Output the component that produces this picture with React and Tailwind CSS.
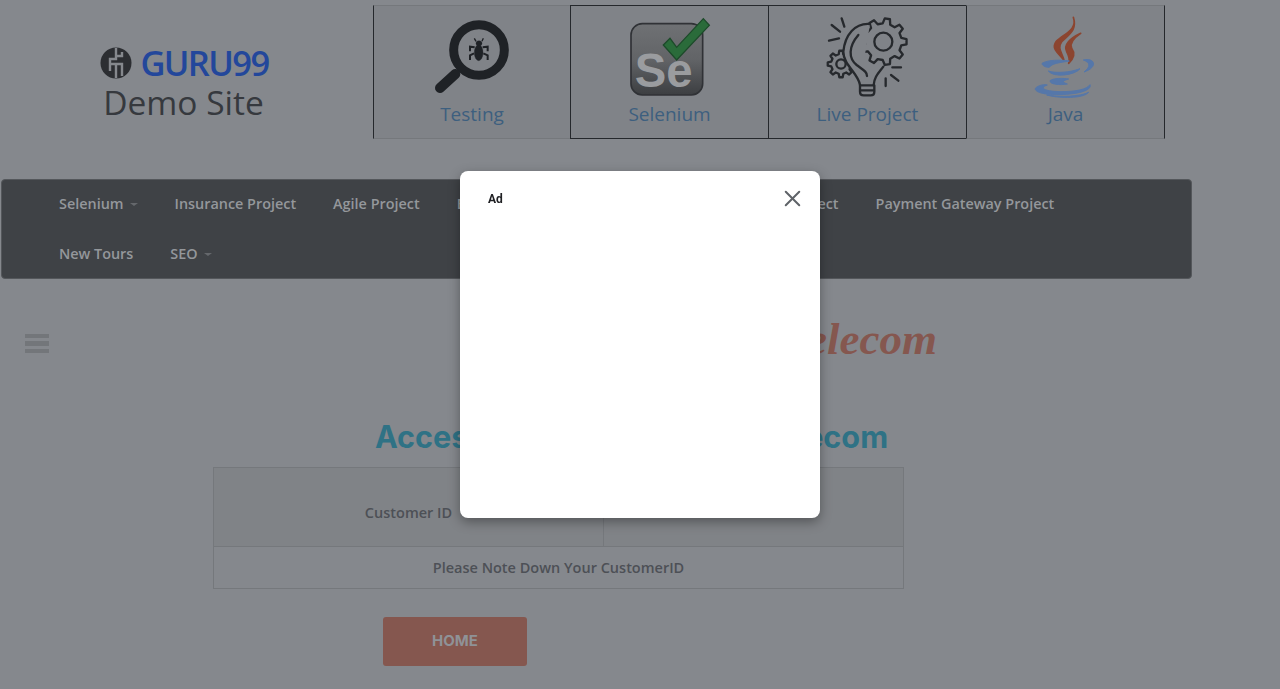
import React from 'react';
import { X } from 'lucide-react';

// gear outline as a polygon, teeth computed around the centre
const gearPoints = (cx, cy, outer, inner, teeth) => {
  const pts = [];
  const step = (Math.PI * 2) / teeth;
  for (let i = 0; i < teeth; i++) {
    const a = i * step;
    const w = step * 0.2;
    [
      [inner, a - w * 1.5],
      [outer, a - w * 0.8],
      [outer, a + w * 0.8],
      [inner, a + w * 1.5],
    ].forEach(([r, t]) => {
      pts.push(`${(cx + r * Math.cos(t)).toFixed(1)},${(cy + r * Math.sin(t)).toFixed(1)}`);
    });
  }
  return pts.join(' ');
};

const TestingIcon = () => (
  <svg width="100" height="95" viewBox="6 30 300 285">
    <circle cx="177" cy="150" r="76" fill="none" stroke="#1f2226" strokeWidth="27" />
    <path d="M106 222 L60 264" stroke="#1f2226" strokeWidth="30" strokeLinecap="round" />
    <g fill="#1f2226" stroke="#1f2226">
      <ellipse cx="176" cy="158" rx="13" ry="24" />
      <ellipse cx="177" cy="130" rx="9" ry="8" />
      <path d="M168 124 L163 115 M186 124 L190 115" strokeWidth="4" fill="none" />
      <path d="M164 142 L150 140 L150 154 M188 142 L203 140 L203 154 M162 160 L150 166 L150 180 M190 160 L203 166 L203 180" strokeWidth="6" fill="none" />
    </g>
  </svg>
);

const SeleniumIcon = () => (
  <svg width="100" height="95" viewBox="0 0 300 285">
    <defs>
      <linearGradient id="seBox" x1="0" y1="0" x2="0" y2="1">
        <stop offset="0" stopColor="#6f7174" />
        <stop offset="0.5" stopColor="#626467" />
        <stop offset="1" stopColor="#3c3e41" />
      </linearGradient>
    </defs>
    <rect x="33" y="41" width="215" height="214" rx="34" fill="url(#seBox)" stroke="#303236" strokeWidth="5" />
    <text x="44" y="232" fontFamily="Liberation Sans, sans-serif" fontWeight="700" fontSize="142" fill="#9a9c9f">Se</text>
    <polygon points="130,105 150,85 170,112 250,26 268,46 170,150" fill="#2a6b3a" stroke="#1d4a2a" strokeWidth="4" />
  </svg>
);

const LiveIcon = () => (
  <svg width="100" height="95" viewBox="9 0 300 285" fill="none" stroke="#26292d" strokeWidth="7" strokeLinecap="round" strokeLinejoin="round">
    <polygon points={gearPoints(205, 95, 70, 55, 9)} />
    <circle cx="205" cy="95" r="27" />
    <polygon points={gearPoints(78, 162, 40, 30, 8)} />
    <circle cx="78" cy="162" r="14" />
    <path d="M165 42 C120 38 90 75 85 125 C85 165 130 190 135 225" fill="#808388" />
    <path d="M205 170 C190 190 178 200 176 225" />
    <path d="M130 75 C100 110 100 145 125 165 C145 180 156 185 156 198" />
    <path d="M135 226 H178 V245 Q178 256 167 256 H146 Q135 256 135 245 Z" />
    <path d="M137 241 H176" />
    <path d="M80 25 L88 50 M50 45 L75 65 M42 92 L72 85 M232 172 H258 M228 195 L250 212 M212 205 V228" />
  </svg>
);

const JavaIcon = () => (
  <svg width="90" height="95" viewBox="3 0 270 285">
    <g fill="#8c4530" stroke="#8c4530" strokeWidth="5" strokeLinejoin="round">
      <path d="M160 22 C174 60 130 72 108 95 C92 118 118 130 132 152 C128 130 110 115 125 95 C148 72 172 60 160 22Z" />
      <path d="M182 70 C150 85 130 105 140 125 C148 140 150 150 146 160 C162 145 166 130 155 115 C148 100 160 85 182 70Z" />
    </g>
    <g fill="#5577aa" stroke="#5577aa" strokeWidth="3" strokeLinejoin="round">
      <path d="M66 160 C85 149 120 149 148 153 C120 158 95 160 88 172 C75 172 66 166 66 160Z" />
      <path d="M85 183 C105 190 150 188 180 176 C165 196 100 204 85 183Z" />
      <path d="M90 212 C100 204 130 204 146 207 C130 212 122 215 142 222 C120 226 88 223 90 212Z" />
      <path d="M46 235 C55 225 75 222 82 225 C60 232 65 243 120 245 C170 245 200 238 210 224 C216 240 180 252 120 254 C80 255 43 248 46 235Z" />
      <path d="M80 255 C120 262 180 260 206 247 C190 266 120 266 80 255Z" />
      <path d="M190 150 C225 142 235 172 192 186 C212 170 212 158 190 150Z" />
    </g>
  </svg>
);

const Tile = ({ label, active, last, width, children }) => (
  <div
    className={`${width} h-[134px] flex flex-col items-center pt-[4px] border-l bg-[#808388] border-y ${
      active ? 'border-y-[#25282c] border-l-[#25282c]' : 'border-y-[#75787c] border-l-[#25282c]'
    } ${last ? 'border-r border-r-[#25282c]' : ''}`}
  >
    {children}
    <span className="font-['Open_Sans',sans-serif] font-medium text-[19px] leading-[26px] mt-[-4px] text-[#3d5f7f]">{label}</span>
  </div>
);

const NavItem = ({ label, caret }) => (
  <div className="h-[50px] flex items-center pb-[3px] pl-[18px] pr-[19px] text-[#94979b] text-[14.4px] font-semibold">
    {label}
    {caret && <span className="ml-[6px] mt-[2px] border-x-[4px] border-x-transparent border-t-[3px] border-t-[#65686c]" />}
  </div>
);

export default function App() {
  return (
    <div className="relative h-[689px] overflow-hidden bg-[#85888d] font-['Open_Sans',sans-serif]">
      {/* Header */}
      <div className="flex pt-[5px]">
        <div className="w-[373px] flex flex-col items-center pt-[39px] pr-[6px]">
          <div className="flex items-center gap-[8px] h-[38px] ml-[2px]">
            <svg width="32" height="32" viewBox="0 0 32 32">
              <circle cx="16" cy="16" r="15.5" fill="#2c2e32" />
              <path d="M16 1 V12 H10 V24 M22 5 V9 H16 M16 17 H22 V29 M10 17 H16 V31" fill="none" stroke="#85888d" strokeWidth="2.4" />
            </svg>
            <span className="text-[34.5px] leading-[38px] font-semibold text-[#23479b] tracking-[-1.6px]">GURU99</span>
          </div>
          <span className="text-[33.5px] leading-[40px] text-[#36393e]">Demo Site</span>
        </div>
        <div className="flex">
          <Tile width="w-[197px]" label="Testing"><TestingIcon /></Tile>
          <Tile width="w-[198px]" label="Selenium" active><SeleniumIcon /></Tile>
          <Tile width="w-[198px]" label="Live Project" active><LiveIcon /></Tile>
          <Tile width="w-[199px]" label="Java" last><JavaIcon /></Tile>
        </div>
      </div>

      {/* Nav */}
      <div className="ml-px mt-[40px] w-[1191px] h-[100px] rounded-[4px] bg-[#3f4246] pl-[39px] border border-[#54575b]">
        <div className="flex">
          <NavItem label="Selenium" caret />
          <NavItem label="Insurance Project" />
          <NavItem label="Agile Project" />
          <NavItem label="Bank Project" />
          <NavItem label="Security Project" />
          <NavItem label="Telecom Project" />
          <NavItem label="Payment Gateway Project" />
        </div>
        <div className="flex">
          <NavItem label="New Tours" />
          <NavItem label="SEO" caret />
        </div>
      </div>

      {/* Logo row */}
      <div className="flex items-center justify-between w-[937px] h-[74px] pl-[25px] mt-[27px]">
        <div className="flex flex-col gap-[3px] w-[24px]">
          <div className="h-[4px] bg-[#73767a]" />
          <div className="h-[5px] bg-[#73767a]" />
          <div className="h-[4px] bg-[#73767a]" />
        </div>
        <span className="font-['Liberation_Serif',serif] italic font-bold text-[45px] leading-none pb-[7px] text-[#85574f]">Guru99 telecom</span>
      </div>

      {/* Heading */}
      <h1 className="w-[1263px] mt-[37px] text-center font-['Inter',sans-serif] font-bold text-[30.6px] leading-[40px] text-[#2f7285]">
        Access Details to Guru99 Telecom
      </h1>

      {/* Result table */}
      <div className="ml-[213px] mt-[10px] w-[691px] border border-[#75787c] text-[14.5px] font-semibold text-[#4d5056]">
        <div className="flex h-[79px] bg-[#808387] border-b border-[#75787c]">
          <div className="w-[390px] flex items-center justify-center pt-[11px] border-r border-[#75787c]">Customer ID</div>
          <div className="flex-1 flex items-center justify-center pt-[8px] text-[17px] font-bold text-[#4d5056]">493671</div>
        </div>
        <div className="h-[41px] flex items-center justify-center">Please Note Down Your CustomerID</div>
      </div>

      {/* Home button */}
      <div className="ml-[383px] mt-[28px] w-[144px] h-[49px] rounded-[3px] bg-[#85574f] flex items-center justify-center font-['Inter',sans-serif] font-bold text-[15px] text-[#8f9297]">
        HOME
      </div>

      {/* Ad dialog */}
      <div className="fixed left-[460px] top-[171px] w-[360px] h-[347px] rounded-[8px] bg-white shadow-[0_4px_12px_rgba(0,0,0,0.35)]">
        <div className="flex items-center justify-between pl-[28px] pr-[14px] pt-[14px]">
          <span className="font-['Roboto',sans-serif] font-bold text-[12px] leading-[24px] mt-px text-[#202124]">Ad</span>
          <X size={27} strokeWidth={1.8} className="text-[#5f6368]" />
        </div>
      </div>
    </div>
  );
}
